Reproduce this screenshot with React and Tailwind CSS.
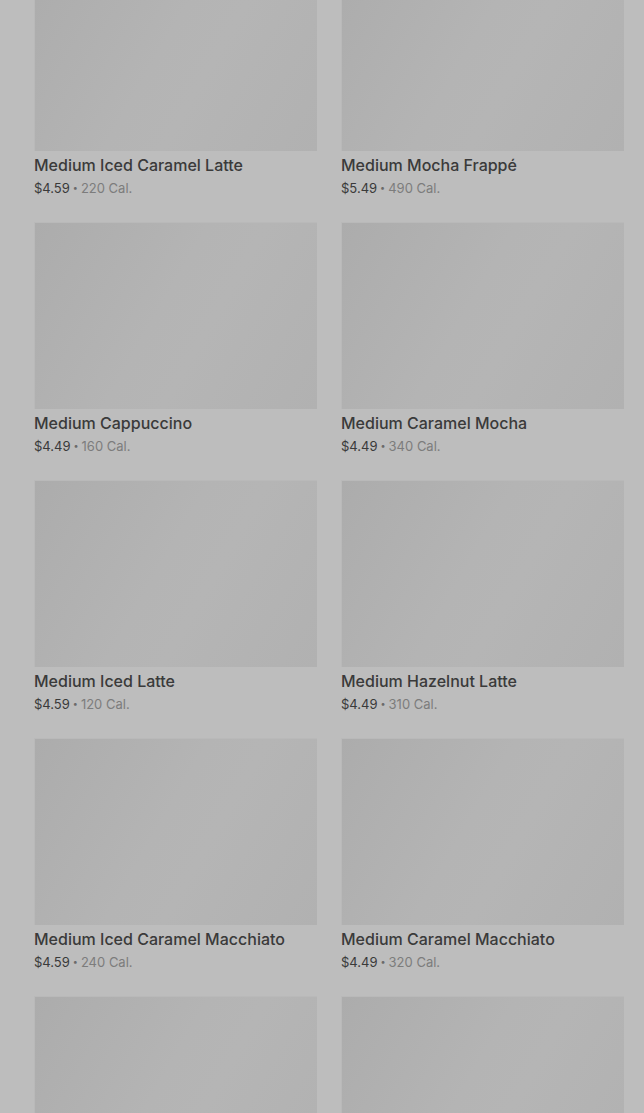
import React from "react";

const items = [
  ["Medium Iced Caramel Latte", "$4.59", "220"],
  ["Medium Mocha Frappé", "$5.49", "490"],
  ["Medium Cappuccino", "$4.49", "160"],
  ["Medium Caramel Mocha", "$4.49", "340"],
  ["Medium Iced Latte", "$4.59", "120"],
  ["Medium Hazelnut Latte", "$4.49", "310"],
  ["Medium Iced Caramel Macchiato", "$4.59", "240"],
  ["Medium Caramel Macchiato", "$4.49", "320"],
  [null],
  [null],
];

function Card({ name, price, cal }) {
  return (
    <div className="flex flex-col">
      <div className="h-[187px] w-full bg-[linear-gradient(120deg,#acacac_0%,#b4b4b4_45%,#b5b5b5_60%,#b1b1b1_100%)] border-t border-l border-[#b9b9b9]" />
      {name && (
        <>
          <div className="mt-[5px] text-[16px] leading-[18px] font-medium text-[#3a3a3a]">{name}</div>
          <div className="mt-[5px] flex items-center text-[13px] leading-[18px] text-[#3a3a3a]">
            <span>{price}</span>
            <span className="mx-[3px] text-[9px] text-[#6a6a6a]">•</span>
            <span className="text-[#7c7c7c]">{cal} Cal.</span>
          </div>
        </>
      )}
    </div>
  );
}

export default function App() {
  return (
    <div className="h-[1113px] w-[644px] overflow-hidden bg-[#bdbdbd] font-['Inter',sans-serif]">
      <div className="-mt-[36px] pl-[34px] pr-[20px] grid grid-cols-2 gap-x-[24px] gap-y-[25px]">
        {items.map(([n, p, c], i) => (
          <Card key={i} name={n} price={p} cal={c} />
        ))}
      </div>
    </div>
  );
}
